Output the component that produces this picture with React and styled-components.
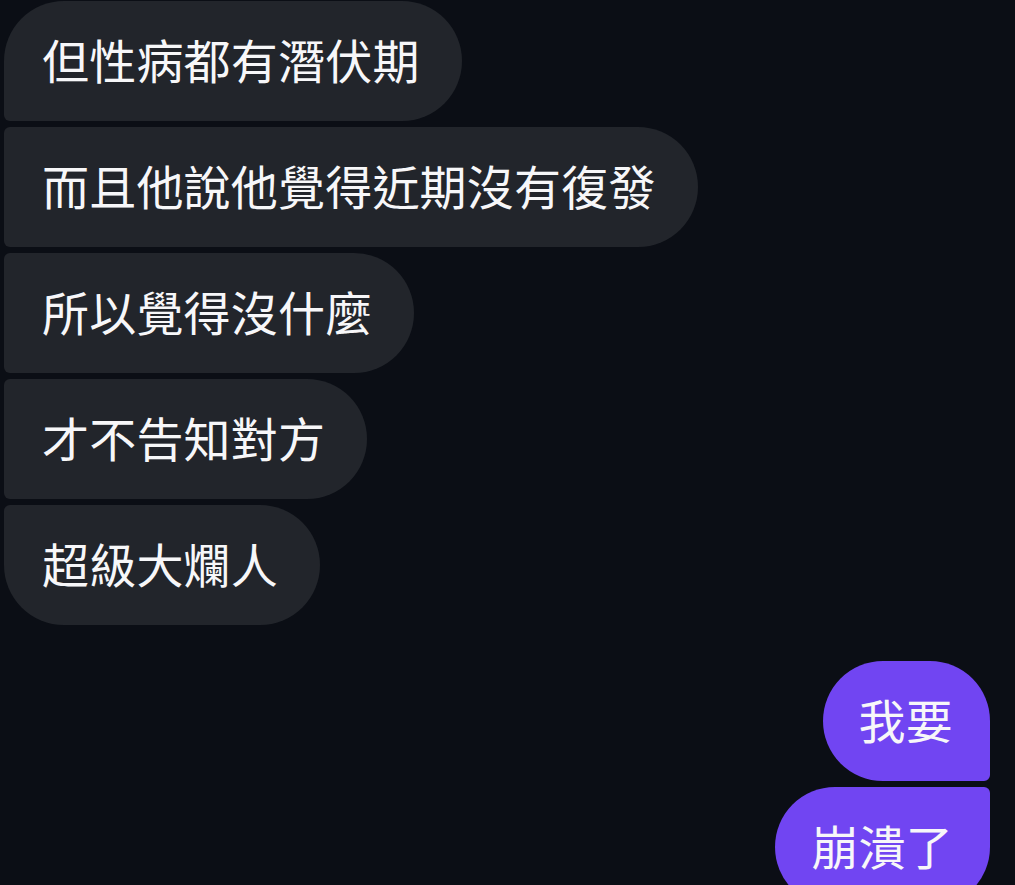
import React from 'react'
import styled, { createGlobalStyle, css } from 'styled-components'

const GlobalStyle = createGlobalStyle`
  html, body {
    margin: 0;
    padding: 0;
    background-color: #0b0e15;
    overflow: hidden;
  }

  body {
    font-family: 'Noto Sans CJK TC', 'Noto Sans CJK SC', 'Noto Sans', sans-serif;
  }
`

const Thread = styled.div`
  width: 1015px;
  height: 885px;
  box-sizing: border-box;
  padding-top: 1px;
  display: flex;
  flex-direction: column;
  gap: 36px;
  overflow: hidden;
`

const Group = styled.div`
  display: flex;
  flex-direction: column;
  gap: 6px;
  align-items: ${({ mine }) => (mine ? 'flex-end' : 'flex-start')};
  padding: ${({ mine }) => (mine ? '0 25px 0 0' : '0 0 0 4px')};
`

const BIG = '60px'
const SMALL = '6px'

const cornerRadius = ({ mine, first, last }) => {
  if (mine) {
    return css`
      border-radius: ${BIG} ${first ? BIG : SMALL} ${last ? BIG : SMALL} ${BIG};
    `
  }
  return css`
    border-radius: ${first ? BIG : SMALL} ${BIG} ${BIG} ${last ? BIG : SMALL};
  `
}

const Bubble = styled.div`
  flex-shrink: 0;
  box-sizing: border-box;
  height: 120px;
  display: flex;
  align-items: center;
  padding: ${({ mine }) => (mine ? '0 37px 5px 36px' : '0 42px 5px 38px')};
  background-color: ${({ mine }) => (mine ? '#7145f2' : '#22252b')};
  color: #f7f7f9;
  font-size: 47px;
  line-height: 60px;
  letter-spacing: 0.2px;
  white-space: nowrap;
  ${cornerRadius}
`

const theirs = [
  '但性病都有潛伏期',
  '而且他說他覺得近期沒有復發',
  '所以覺得沒什麼',
  '才不告知對方',
  '超級大爛人',
]

const mine = ['我要', '崩潰了']

const App = () => (
  <>
    <GlobalStyle />
    <Thread>
      <Group>
        {theirs.map((text, i) => (
          <Bubble key={text} first={i === 0} last={i === theirs.length - 1}>
            {text}
          </Bubble>
        ))}
      </Group>
      <Group mine>
        {mine.map((text, i) => (
          <Bubble key={text} mine first={i === 0} last={i === mine.length - 1}>
            {text}
          </Bubble>
        ))}
      </Group>
    </Thread>
  </>
)

export default App
